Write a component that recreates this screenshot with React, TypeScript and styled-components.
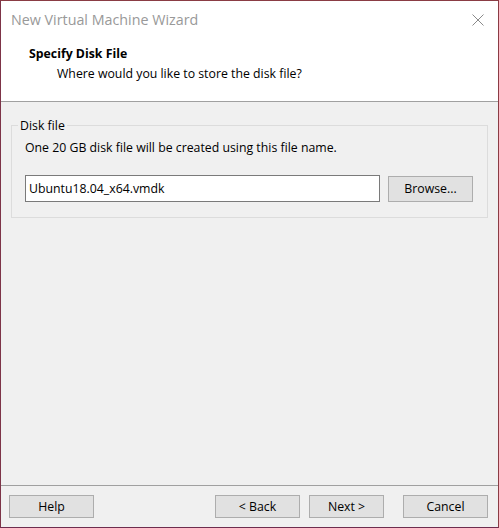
import React from "react";
import styled, { createGlobalStyle } from "styled-components";

const UI_FONT = `"Open Sans", "Noto Sans", "Liberation Sans", sans-serif`;

const Global = createGlobalStyle`
  html, body { margin: 0; padding: 0; background: #ffffff; }
  * { box-sizing: border-box; }
`;

const Window = styled.div`
  width: 499px;
  height: 528px;
  display: flex;
  flex-direction: column;
  border: 1px solid #8a3c44;
  border-bottom-color: #6e2c4e;
  border-left-color: #7d3448;
  background: #f0f0f0;
  font-family: ${UI_FONT};
  font-size: 12.3px;
  color: #000;
  overflow: hidden;
`;

const TopArea = styled.div`
  background: #ffffff;
  border-bottom: 1px solid #a0a0a0;
  height: 101px;
  display: flex;
  flex-direction: column;
`;

const TitleBar = styled.div`
  height: 38px;
  display: flex;
  align-items: center;
  justify-content: space-between;
  padding: 0 14px 0 10px;
`;

const TitleText = styled.div`
  font-family: ${UI_FONT};
  font-size: 14.3px;
  color: #999999;
  padding-bottom: 1px;
`;

const CloseIcon = styled.svg`
  width: 12px;
  height: 12px;
  margin-bottom: 1px;
`;

const Header = styled.div`
  padding: 6px 0 0 28px;
  display: flex;
  flex-direction: column;
  gap: 3px;
`;

const HeaderTitle = styled.div`
  font-weight: bold;
  line-height: 17px;
`;

const HeaderSub = styled.div`
  padding-left: 28px;
  line-height: 17px;
`;

const Content = styled.div`
  flex: 1;
  padding: 15px 10px 0 10px;
`;

const Group = styled.fieldset`
  margin: 0;
  border: 1px solid #dcdcdc;
  padding: 4px 13px 15px 13px;
  min-width: 0;
`;

const Legend = styled.legend`
  padding: 0 2px;
  margin-left: -7px;
  line-height: 17px;
`;

const Info = styled.div`
  line-height: 17px;
  margin-top: 1px;
`;

const FileRow = styled.div`
  display: flex;
  align-items: center;
  gap: 8px;
  margin-top: 19px;
`;

const TextInput = styled.input`
  width: 355px;
  height: 27px;
  border: 1px solid #7a7a7a;
  background: #fff;
  font-family: ${UI_FONT};
  font-size: 12.3px;
  padding: 0 3px;
  color: #000;
  outline: none;
`;

const Button = styled.button<{ $w: number }>`
  width: ${(p) => p.$w}px;
  height: 23px;
  background: #e1e1e1;
  border: 1px solid #adadad;
  font-family: ${UI_FONT};
  font-size: 12.3px;
  color: #000;
  padding: 0;
`;

const BrowseButton = styled(Button)`
  height: 26px;
`;

const CancelButton = styled(Button)`
  margin-left: 10px;
`;

const Footer = styled.div`
  height: 42px;
  border-top: 1px solid #a0a0a0;
  display: flex;
  align-items: center;
  padding: 0 10px 0 8px;
  gap: 9px;
`;

const Spacer = styled.div`
  flex: 1;
`;

export default function App() {
  return (
    <>
      <Global />
      <Window>
        <TopArea>
          <TitleBar>
            <TitleText>New Virtual Machine Wizard</TitleText>
            <CloseIcon viewBox="0 0 12 12">
              <path d="M0.5 0.5 L11.5 11.5 M11.5 0.5 L0.5 11.5" stroke="#8a8a8a" strokeWidth="1" fill="none" />
            </CloseIcon>
          </TitleBar>
          <Header>
            <HeaderTitle>Specify Disk File</HeaderTitle>
            <HeaderSub>Where would you like to store the disk file?</HeaderSub>
          </Header>
        </TopArea>
        <Content>
          <Group>
            <Legend>Disk file</Legend>
            <Info>One 20 GB disk file will be created using this file name.</Info>
            <FileRow>
              <TextInput defaultValue="Ubuntu18.04_x64.vmdk" />
              <BrowseButton $w={85}>Browse...</BrowseButton>
            </FileRow>
          </Group>
        </Content>
        <Footer>
          <Button $w={85}>Help</Button>
          <Spacer />
          <Button $w={85}>&lt; Back</Button>
          <Button $w={75}>Next &gt;</Button>
          <CancelButton $w={85}>Cancel</CancelButton>
        </Footer>
      </Window>
    </>
  );
}
